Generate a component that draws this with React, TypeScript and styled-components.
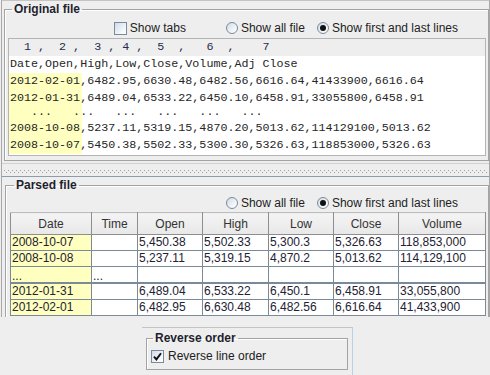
import React from "react";
import styled, { createGlobalStyle } from "styled-components";

const GlobalStyle = createGlobalStyle`
  html, body {
    margin: 0;
    padding: 0;
    background: #eeeeee;
  }
  body {
    font-family: "Liberation Sans", Arial, sans-serif;
    font-size: 12px;
    color: #222222;
  }
`;

const Window = styled.div`
  width: 490px;
  height: 375px;
  overflow: hidden;
  display: flex;
  flex-direction: column;
  background: #eeeeee;
`;

const SplitPane = styled.div`
  flex: 0 0 auto;
  height: 316px;
  margin-left: 1px;
  width: 487px;
  display: flex;
  flex-direction: column;
  border-top: 1px solid #c4c4c4;
  border-left: 1px solid #a8a8a8;
  border-right: 1px solid #a8a8a8;
  overflow: hidden;
`;

const TopPane = styled.div`
  flex: 0 0 auto;
  height: 162px;
  padding: 1px 0 0 2px;
  box-sizing: border-box;
`;

const BottomPane = styled.div`
  flex: 1;
  min-height: 0;
  overflow: hidden;
  padding: 1px 0 0 3px;
  border-top: 1px solid #8d9cab;
`;

const Divider = styled.div`
  flex: 0 0 auto;
  height: 13px;
  box-sizing: border-box;
  border-top: 1px solid #d0d0d0;
  display: flex;
  align-items: center;
  padding: 0 2px;
`;

const Bumps = styled.div`
  flex: 1;
  height: 3px;
  margin-top: 2px;
  background:
    repeating-linear-gradient(90deg, #9aa4ae 0 1px, transparent 1px 4px) 0 0 / 100% 1px no-repeat,
    repeating-linear-gradient(90deg, #9aa4ae 0 1px, transparent 1px 4px) 2px 2px / 100% 1px no-repeat;
`;

const Group = styled.fieldset<{ $padTop: number; $padSide: number; $padBottom?: number }>`
  margin: 0;
  min-width: 0;
  padding: ${(p) => p.$padTop}px 1px ${(p) => p.$padBottom ?? 4}px ${(p) => p.$padSide}px;
  border: 1px solid #a3a3a3;
  box-shadow: inset 1px 1px 0 #ffffff;
`;

const Title = styled.legend<{ $indent?: number }>`
  margin-left: ${(p) => p.$indent ?? 5}px;
  padding: 0 2px;
  font-weight: bold;
  font-size: 12px;
  line-height: 14px;
  color: #1f1f2e;
`;

const OptionsRow = styled.div`
  height: 18px;
  display: flex;
  align-items: center;
  justify-content: flex-end;
  padding-right: 29px;
`;

const Option = styled.label<{ $gapAfter: number }>`
  display: flex;
  align-items: center;
  gap: 3px;
  margin-right: ${(p) => p.$gapAfter}px;
  white-space: nowrap;
  color: #222222;
  &:last-child {
    margin-right: 0;
  }
`;

const Box = styled.span`
  width: 13px;
  height: 13px;
  box-sizing: border-box;
  border: 1px solid #7a8a99;
  background: linear-gradient(135deg, #cfdbea 0%, #f4f7fb 70%, #ffffff 100%);
  display: flex;
  align-items: center;
  justify-content: center;
`;

const Radio = styled.span<{ $on: boolean }>`
  width: 12px;
  height: 12px;
  box-sizing: border-box;
  border-radius: 50%;
  border: 1px solid #7a8a99;
  background: linear-gradient(135deg, #cfdbea 0%, #f4f7fb 70%, #ffffff 100%);
  display: flex;
  align-items: center;
  justify-content: center;
  &::after {
    content: "";
    width: 6px;
    height: 6px;
    border-radius: 50%;
    background: ${(p) => (p.$on ? "#111111" : "transparent")};
  }
`;

const TextArea = styled.div`
  margin: 1px 1px 0 1px;
  border: 1px solid #b4b4b4;
  background: #ffffff;
  font-family: "Liberation Mono", "Courier New", monospace;
  font-size: 11.7px;
  color: #262626;
  padding-bottom: 1px;
  white-space: pre;
  overflow: hidden;
`;

const Ruler = styled.div`
  height: 17px;
  line-height: 17px;
  background: #eeeeee;
  padding-left: 1px;
  color: #2a2a50;
`;

const Line = styled.div`
  height: 17px;
  line-height: 17px;
  padding-left: 1px;
`;

const GapLine = styled.div`
  height: 13px;
  line-height: 10px;
  padding-left: 1px;
`;

const DataLines = styled.div<{ $mark: number }>`
  background: linear-gradient(
    90deg,
    #ffffc0 0,
    #ffffc0 ${(p) => p.$mark}px,
    transparent ${(p) => p.$mark}px
  );
`;

const Grid = styled.table`
  margin-left: 1px;
  width: 475px;
  table-layout: fixed;
  border-collapse: collapse;
  background: #ffffff;
`;

const HeadCell = styled.th`
  height: 21px;
  padding: 0;
  font-weight: normal;
  text-align: center;
  color: #333333;
  background: linear-gradient(#f4f4f4, #e8e8e8);
  border: 1px solid #8e8e8e;
  border-top-color: #bdbdbd;
`;

const Cell = styled.td<{ $mark?: boolean; $thick?: boolean }>`
  height: 15px;
  padding: 0 1px;
  line-height: 15px;
  white-space: nowrap;
  overflow: hidden;
  color: #222233;
  background: ${(p) => (p.$mark ? "#ffffc0" : "#ffffff")};
  border: 1px solid #7a8a99;
  border-bottom-width: ${(p) => (p.$thick ? 2 : 1)}px;
`;

const GapCell = styled(Cell)`
  vertical-align: bottom;
  line-height: 11px;
`;

const ReverseArea = styled.div`
  flex: 1;
  min-height: 0;
  overflow: hidden;
  padding: 10px 0 0 142px;
`;

const ReversePanel = styled.div`
  width: 202px;
  height: 60px;
  padding: 3px 4px 0 4px;
  border-top: 1px solid #c4c4c4;
  border-right: 1px solid #b8cfe5;
`;

const CheckRow = styled.label`
  margin-top: 4px;
  height: 14px;
  display: flex;
  align-items: center;
  gap: 4px;
`;

const Tick = () => (
  <svg width="9" height="9" viewBox="0 0 9 9">
    <path d="M1 4.6 L3.4 7.4 L8 1.2" fill="none" stroke="#111" strokeWidth="1.9" />
  </svg>
);

const fileLines = [
  "2012-02-01,6482.95,6630.48,6482.56,6616.64,41433900,6616.64",
  "2012-01-31,6489.04,6533.22,6450.10,6458.91,33055800,6458.91",
  null,
  "2008-10-08,5237.11,5319.15,4870.20,5013.62,114129100,5013.62",
  "2008-10-07,5450.38,5502.33,5300.30,5326.63,118853000,5326.63",
];

const columns = [
  { name: "Date", width: 81 },
  { name: "Time", width: 46 },
  { name: "Open", width: 65 },
  { name: "High", width: 66 },
  { name: "Low", width: 65 },
  { name: "Close", width: 65 },
  { name: "Volume", width: 87 },
];

const rows: (string[] | null)[] = [
  ["2008-10-07", "", "5,450.38", "5,502.33", "5,300.3", "5,326.63", "118,853,000"],
  ["2008-10-08", "", "5,237.11", "5,319.15", "4,870.2", "5,013.62", "114,129,100"],
  null,
  ["2012-01-31", "", "6,489.04", "6,533.22", "6,450.1", "6,458.91", "33,055,800"],
  ["2012-02-01", "", "6,482.95", "6,630.48", "6,482.56", "6,616.64", "41,433,900"],
];

const ViewOptions = ({ withTabs }: { withTabs?: boolean }) => (
  <OptionsRow>
    {withTabs && (
      <Option $gapAfter={40}>
        <Box />
        Show tabs
      </Option>
    )}
    <Option $gapAfter={12}>
      <Radio $on={false} />
      Show all file
    </Option>
    <Option $gapAfter={0}>
      <Radio $on />
      Show first and last lines
    </Option>
  </OptionsRow>
);

export default function App() {
  return (
    <Window>
      <GlobalStyle />
      <SplitPane>
        <TopPane>
          <Group $padTop={3} $padSide={2}>
            <Title>Original file</Title>
            <ViewOptions withTabs />
            <TextArea>
              <Ruler>{"  1 ,  2 ,  3 , 4 ,  5  ,   6  ,    7"}</Ruler>
              <Line>Date,Open,High,Low,Close,Volume,Adj Close</Line>
              <DataLines $mark={73}>
                {fileLines.map((l, i) =>
                  l ? (
                    <Line key={i}>{l}</Line>
                  ) : (
                    <GapLine key={i}>{"   ...   ...   ...   ...   ...   ..."}</GapLine>
                  )
                )}
              </DataLines>
            </TextArea>
          </Group>
        </TopPane>
        <Divider>
          <Bumps />
        </Divider>
        <BottomPane>
          <Group $padTop={2} $padSide={3}>
            <Title>Parsed file</Title>
            <ViewOptions />
            <Grid>
              <colgroup>
                {columns.map((c) => (
                  <col key={c.name} style={{ width: c.width }} />
                ))}
              </colgroup>
              <thead>
                <tr>
                  {columns.map((c) => (
                    <HeadCell key={c.name}>{c.name}</HeadCell>
                  ))}
                </tr>
              </thead>
              <tbody>
                {rows.map((r, i) =>
                  r ? (
                    <tr key={i}>
                      {r.map((v, j) => (
                        <Cell key={j} $mark={j === 0}>
                          {v}
                        </Cell>
                      ))}
                    </tr>
                  ) : (
                    <tr key={i}>
                      {columns.map((c, j) => (
                        <GapCell key={c.name} $mark={j === 0} $thick>
                          {j < 2 ? "..." : ""}
                        </GapCell>
                      ))}
                    </tr>
                  )
                )}
              </tbody>
            </Grid>
          </Group>
        </BottomPane>
      </SplitPane>
      <ReverseArea>
        <ReversePanel>
          <Group $padTop={0} $padSide={4} $padBottom={6}>
            <Title $indent={2}>Reverse order</Title>
            <CheckRow>
              <Box>
                <Tick />
              </Box>
              Reverse line order
            </CheckRow>
          </Group>
        </ReversePanel>
      </ReverseArea>
    </Window>
  );
}
